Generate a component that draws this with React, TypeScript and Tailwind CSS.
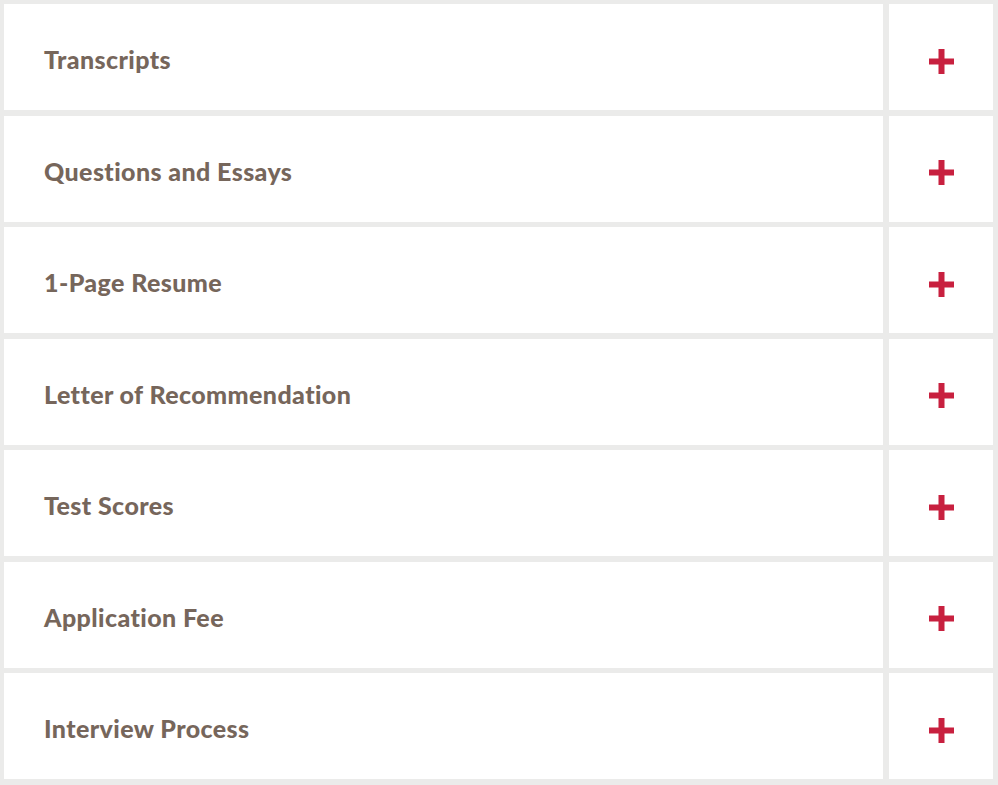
const items = [
  "Transcripts",
  "Questions and Essays",
  "1-Page Resume",
  "Letter of Recommendation",
  "Test Scores",
  "Application Fee",
  "Interview Process",
];

function PlusIcon() {
  return (
    <svg width="25" height="25" viewBox="0 0 25 25" aria-hidden="true">
      <rect x="9.5" y="0" width="6" height="25" fill="#c8203f" />
      <rect x="0" y="9.5" width="25" height="6" fill="#c8203f" />
    </svg>
  );
}

export default function App() {
  return (
    <div className="min-h-[785px] w-[998px] bg-[#ebebea] pt-[4px] pb-[6px] pl-[4px] pr-[5px]">
      <div className="flex flex-col gap-[5.5px]">
        {items.map((label) => (
          <button
            key={label}
            className="flex h-[106px] w-full gap-[6px] text-left"
          >
            <div className="flex flex-1 items-center bg-white pl-[40px] pt-[6px]">
              <span
                className="text-[25px] font-black tracking-[0.4px] text-[#76665b]"
                style={{ fontFamily: "Lato, 'Open Sans', sans-serif" }}
              >
                {label}
              </span>
            </div>
            <div className="flex w-[104px] items-center justify-center bg-white pt-[8px]">
              <PlusIcon />
            </div>
          </button>
        ))}
      </div>
    </div>
  );
}
